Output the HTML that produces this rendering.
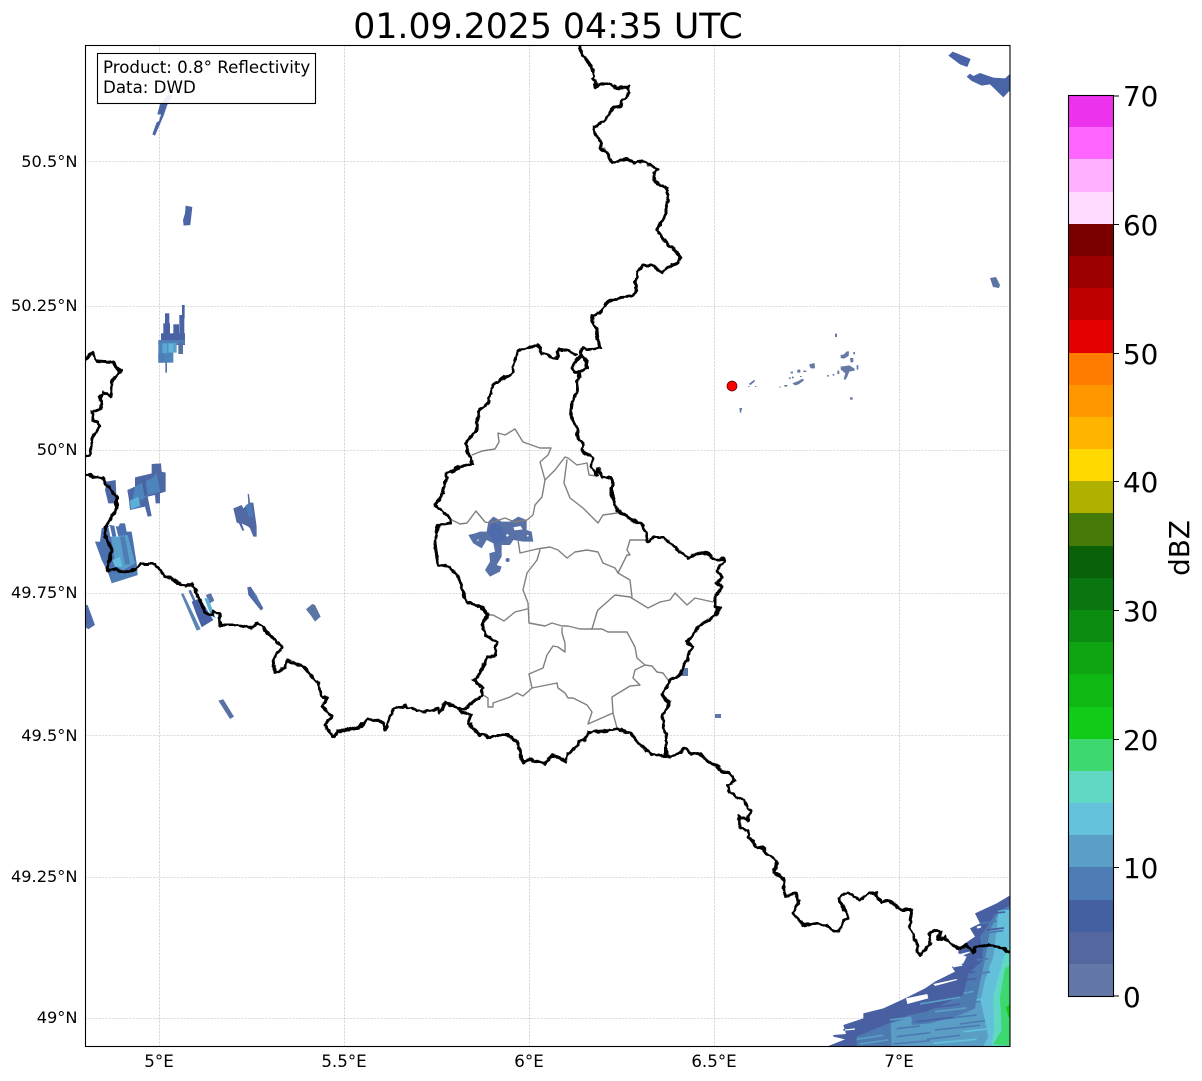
<!DOCTYPE html>
<html><head><meta charset="utf-8"><style>
html,body{margin:0;padding:0;background:#fff}
svg{display:block}
text{font-family:"DejaVu Sans","Liberation Sans",sans-serif;fill:#000}
</style></head><body>
<svg width="1202" height="1081" viewBox="0 0 1202 1081" xmlns="http://www.w3.org/2000/svg">
<defs><clipPath id="f"><rect x="85" y="45" width="925" height="1001"/></clipPath>
<filter id="w" filterUnits="userSpaceOnUse" x="60" y="20" width="980" height="1050"><feTurbulence type="fractalNoise" baseFrequency=".16" numOctaves="2" seed="4"/><feDisplacementMap in="SourceGraphic" scale="4.5" xChannelSelector="R" yChannelSelector="G"/></filter></defs>
<rect width="1202" height="1081" fill="#fff"/>
<g clip-path="url(#f)">
<!-- grid -->
<g stroke="#bcbcbc" stroke-width=".6" stroke-dasharray="2.2 1.2" fill="none">
<path d="M159.500 45V1046M344.500 45V1046M529.500 45V1046M714.500 45V1046M899.500 45V1046"/>
<path d="M85 161.500H1010M85 306.500H1010M85 450.500H1010M85 593.500H1010M85 735.500H1010M85 877.500H1010M85 1018.500H1010"/>
</g>
<!-- radar top-left, zoom 1 coords -->
<g transform="translate(85 45) scale(.3333)">
<path fill="#4a64a6" d="M202 268 215 232 222 228 228 208 217 208 225 178 250 148 262 150 246 182 236 212 210 272Z"/>
<path fill="#4a64a6" d="M302 482 322 486 316 540 296 542 294 525 300 505Z"/>
<g fill="#4862a4">
<rect x="240" y="805" width="13" height="60"/><rect x="235" y="835" width="20" height="40"/>
<rect x="265" y="838" width="17" height="40"/><rect x="283" y="810" width="15" height="80"/>
<rect x="291" y="780" width="8" height="40"/><rect x="228" y="865" width="72" height="35"/>
</g>
</g>
<!-- radar west, zoom 5 coords -->
<g transform="translate(85 340) scale(.3333)">
<rect x="220" y="0" width="80" height="12" fill="#4e7cb4"/>
<rect x="220" y="8" width="45" height="60" fill="#4e84bc"/>
<rect x="232" y="10" width="15" height="30" fill="#5aa8d4"/><rect x="250" y="10" width="15" height="28" fill="#62b4dc"/>
<rect x="220" y="40" width="18" height="28" fill="#4e7cb4"/>
<rect x="265" y="8" width="10" height="30" fill="#5a9ec6"/><rect x="280" y="8" width="14" height="34" fill="#56709f"/>
<rect x="241" y="65" width="5" height="33" fill="#5a72a4"/>
<path fill="#4e68a6" d="M127 450 150 440 150 412 200 400 200 372 228 370 230 395 242 398 242 455 225 460 225 490 212 490 210 465 188 470 200 528 188 530 180 500 135 510 132 480Z"/>
<path fill="#4e84bc" d="M150 440 200 415 215 400 225 455 190 465 170 480 140 490Z"/>
<path fill="#5ab0d8" d="M135 482 160 470 166 498 138 508Z"/>
<path fill="#4862a2" d="M170 415 180 412 188 465 178 468Z"/>
<path fill="#4c66a6" d="M65 425 92 420 95 490 70 490 60 450Z"/>
<path fill="#4c70ae" d="M30 605 45 605 50 565 65 560 75 555 100 560 105 550 120 550 125 575 140 575 155 670 158 705 80 730 70 700 50 660Z"/>
<path fill="#5a9fcc" d="M78 590 128 585 150 670 115 690 92 680Z"/>
<path fill="#64bce0" d="M82 660 105 650 112 680 90 680Z"/>
<path fill="#4e7cb4" d="M105 590 120 590 135 672 120 675Z"/>
<path fill="#4f7eb6" d="M75 700 155 690 158 705 80 730Z"/>
<path fill="#fff" d="M70 560 75 558 82 590 76 590ZM88 558 92 558 100 590 94 590Z"/>
<path fill="#5268a4" d="M445 505 470 495 475 505 490 490 488 462 492 462 495 488 505 488 515 560 515 590 505 590 495 565 490 560 470 550 478 572 472 572 462 550 455 548Z"/>
<path fill="#4c7cb6" d="M482 495 498 490 505 530 490 530Z"/>
<path fill="#5068a6" d="M487 742 497 740 510 760 535 805 528 812 510 790 490 765Z"/>
<path fill="#4e78b0" d="M505 765 515 765 525 795 518 790Z"/>
<path fill="#5a74a4" d="M663 808 682 792 690 795 707 830 690 845 680 830Z"/>
<path fill="#4e6cac" d="M0 795 8 795 30 855 10 868 0 860Z"/>
<path fill="#5a84b4" d="M288 762 295 760 347 868 335 872Z"/>
<path fill="#5870a4" d="M310 752 318 750 345 810 338 812Z"/>
<path fill="#4860a6" d="M320 785 345 775 385 840 350 862 335 825Z"/>
<path fill="#5a74aa" d="M362 765 378 760 388 782 375 790Z"/>
<path fill="#60b0d4" d="M358 775 370 775 392 835 378 828Z"/>
<path fill="#5872a6" d="M400 1082 415 1078 447 1130 435 1137Z"/>
</g>
<!-- central cluster, zoom 2 coords -->
<g transform="translate(430 340) scale(.3333)">
<path fill="#5872a8" d="M115 585 135 580 150 575 170 575 175 545 190 530 200 535 215 545 240 545 265 530 290 540 290 570 305 575 310 605 280 605 250 600 240 615 215 615 215 650 200 675 215 680 210 695 180 710 165 690 180 665 178 640 195 635 190 610 170 600 155 625 130 610Z"/>
<path fill="#4f6aaa" d="M172 575 190 545 215 560 230 600 195 610Z"/>
<circle cx="233" cy="660" r="6" fill="#5470a8"/>
<path fill="#fff" d="M250 562 272 558 278 568 254 571ZM290 585 296 585 294 592ZM140 600 146 598 145 604ZM228 585 234 582 237 588 230 590Z"/>
</g>
<g fill="#5c78a8"><rect x="682" y="668" width="6" height="8"/><rect x="715" y="714" width="6" height="4"/></g>
<!-- dots east, zoom 7 coords -->
<g transform="translate(720 320) scale(.3333)" fill="#6678a4">
<rect x="345" y="41" width="6" height="10"/>
<path d="M362 105 372 103 380 94 387 94 386 108 372 116 362 114ZM390 114 400 114 400 126 392 128ZM400 96h5v7h-5ZM410 135h5v14h-5Z"/>
<path d="M322 165h5v5h-5ZM338 162h5v5h-5ZM352 152h6v10h-6ZM362 140 388 136 404 146 404 152 388 155 382 170 376 180 371 177 376 160 362 148Z"/>
<rect x="390" y="232" width="8" height="7"/>
<path d="M267 133 284 129 285 145 272 145ZM232 149h9v9h-9ZM250 152h9v4h-9ZM212 155h7v5h-7ZM207 172h5v5h-5ZM216 170h5v5h-5ZM217 190 235 183 248 176 252 181 236 193 225 196ZM193 195h9v5h-9ZM178 200h4v3h-4ZM240 168h5v3h-5Z"/>
<path d="M86 192 102 180 106 183 92 195ZM85 198h4v3h-4ZM105 198h4v3h-4ZM58 264h8v6h-2v8h-4Z"/>
</g>
<!-- NE, zoom 11 coords -->
<g transform="translate(940 45) scale(.3333)" fill="#4a64a8">
<path d="M25 32 38 20 92 42 82 66 60 58Z"/>
<path d="M80 95 90 86 100 93 120 84 160 98 195 100 212 85 216 130 190 157 150 118 125 122 95 108Z"/>
</g>
<path fill="#5a74a6" d="M990 278 996 277 1000 285 999 288 993 287Z"/>
<!-- SE fan, zoom 4 coords -->
<g transform="translate(820 880) scale(.3333)">
<path fill="#4860a2" d="M25 498 75 478 40 470 40 465 78 462 70 435 130 415 130 400 190 385 255 355 315 325 345 305 405 275 395 260 430 250 440 230 415 220 415 205 435 190 465 170 450 145 480 130 465 100 530 70 572 45 572 498Z"/>
<path fill="#4e7ab2" d="M110 498 110 470 205 430 270 405 320 395 430 345 445 280 490 240 480 170 505 135 530 95 572 75 572 498Z"/>
<path fill="#5a9ec6" d="M215 498 212 430 275 410 275 435 330 430 420 405 465 385 475 330 495 240 510 150 535 100 572 88 572 498Z"/>
<path fill="#64c0da" d="M490 498 505 470 482 360 495 300 520 230 530 150 535 92 572 88 572 498Z"/>
<path fill="#60d8c4" d="M515 498 522 450 520 350 545 250 570 190 572 190 572 498Z"/>
<path fill="#3ed870" d="M520 492 545 450 540 350 555 265 572 255 572 498Z"/>
<path fill="#10cc18" d="M558 382 572 370 572 412 566 412Z"/>
<g stroke-width="5" fill="none">
<g stroke="#5a9ec6">
<path d="M110 478 190 466M120 492 205 480M210 420 270 412M430 340 462 334M300 372 420 352M345 395 440 384"/></g>
<g stroke="#4e7ab2">
<path d="M230 446 300 438M230 470 330 458M320 478 420 466M220 492 330 482M420 432 495 422M340 420 470 405M430 370 480 364M470 240 505 236M480 280 510 276M490 160 550 152M480 130 530 124M345 450 480 436"/></g>
<g stroke="#4860a2">
<path d="M280 392 340 384M330 384 420 372M430 300 470 296M430 280 465 276M450 215 490 210M500 150 552 144M520 100 555 96M70 450 130 444M290 425 400 412"/></g>
<g stroke="#64c0da">
<path d="M430 455 500 447M470 360 515 354M510 270 545 264M540 130 570 126M340 490 470 478"/></g>
</g>
<path fill="#fff" d="M258 355 322 342 325 355 262 372ZM340 312 410 297 412 300 345 318ZM420 222 448 215 450 218 424 228ZM398 258 425 252 428 257 400 262ZM470 140 482 137 484 142 472 146ZM75 448 105 445 105 449 75 452Z"/>
</g>
<!-- gray lines -->
<g fill="none" stroke="#808080" stroke-width="1.4" stroke-linejoin="round" stroke-linecap="round">
<path d="M472 455 482 451 495 449 499 442 498 433 505 435 515 429 523 442 540 448 551 448 548 455 540 462 545 480 542 497 535 505 533 515 527 520 515 522 505 518 490 523 485 522 476 511 467 523 460 524 452 520"/>
<path d="M545 480 555 470 565 457 568 458 577 465 587 463 589 475 597 476"/>
<path d="M567 460 564 483 570 498 583 508 598 523 603 515 617 513"/>
<path d="M518 540 520 553 537 549 550 547 558 550 567 558 575 552 587 550 598 552 603 563 615 568 618 573 627 555 630 555 627 550 630 540 647 540"/>
<path d="M618 573 630 580 632 597"/>
<path d="M540 550 537 560 527 573 523 590 528 603 529 623 545 626 552 623 562 626 568 626 580 629 592 629 602 629 608 632 627 632 635 647 637 658 645 665 652 666 657 672 663 673 668 680"/>
<path d="M592 629 597 612 598 610 615 595 630 597 648 608 660 602 670 600 675 593 687 605 695 598 713 602"/>
<path d="M562 628 562 633 565 643 565 652 558 647 553 646 547 655 543 668 529 674 532 688"/>
<path d="M483 695 488 698 488 707 493 707 493 703 510 697 517 693 523 696 532 688 547 685 557 683 558 688 565 693 568 698 573 698 587 705 592 712 588 724 613 713 612 697 630 686 640 685 633 678 635 670 645 665"/>
<path d="M613 713 617 728"/>
<path d="M483 620 488 615 493 615 504 621 515 612 527 609"/>
</g>
<!-- borders -->
<g fill="none" stroke="#000" stroke-width="3" stroke-linejoin="round" stroke-linecap="round" filter="url(#w)">
<path d="M578 42 583 57 591 65 594 76 592 78 596 82 595 88 600 84 610 84 617 88 628 87 629 92 622 102 621 106 613 108 605 120 594 127 595 135 602 142 599 148 607 152 612 163 622 160 628 160 635 162 643 161 655 168 658 169 654 173 655 182 667 188 668 198 666 208 666 215 657 230 665 242 677 252 680 257 678 263 668 267 663 273 652 265 643 265 638 272 635 282 637 290 632 297 625 296 607 302 602 312 593 315 592 322 597 330 598 340 600 347 587 350 582 348 581 355 587 362 587 368 580 373 574 372 572 369 575 362 581 356"/>
<path d="M581 372 577 380 578 390 573 400 570 415 577 428 578 438 583 442 582 450 592 458 591 468 597 475 598 468 602 477 612 478 612 495 617 510 632 520 643 525 648 542 655 537 663 537 678 550 688 558 703 552 717 560 724 558 725 562 717 570 722 577 717 583 722 587 715 597 715 607 720 608 715 615 700 626 687 642 692 647 680 675 670 680 667 687 662 695 670 703 662 717 666 737 666 757"/>
<path d="M576 355 568 350 558 350 557 359 542 353 538 345 517 351 512 373 493 385 488 403 478 411 477 430 465 443 472 463 460 467 447 473 443 493 435 505 450 518 450 523 438 525 435 543 438 565 450 567 457 575 467 603 480 606 488 615 482 625 485 635 497 642 495 656 487 657 480 673 474 680 483 688 482 695 465 708 460 709 463 713 471 715 468 723 480 735 490 737 497 735 508 735 518 742 520 754 523 762 530 760 540 762 545 764 552 755 558 757 566 762 567 753 577 747 578 742 585 740 588 732 603 731 618 729 630 733 640 745 652 754 660 755 665 757 675 755 686 748 692 753 701 755 710 763 715 765 723 772 729 773 735 781 728 785 730 792 738 798 745 800 747 808 752 811 747 820 740 816 738 820 742 828 748 830 748 837 757 847 762 848 772 858 777 860 774 873 783 877 784 893 786 896 795 893 799 902 793 913 803 925 818 923 838 932 844 920 848 918 843 907 839 898 847 892 860 900 869 893 876 893 882 903 888 900 902 910 912 910 909 927 917 943 917 952 920 955 930 945 929 933 937 930 941 932 937 939 945 938 958 949 967 945 973 952 975 948 990 945 1003 948 1008 952 1016 951"/>
<path d="M80 363 93 353 97 361 113 362 117 368 121 371 112 380 111 397 103 392 100 397 101 408 92 412 93 420 100 426 92 438 90 455 80 459"/>
<path d="M80 474 102 478 109 488 117 498 117 508 105 528 106 538 112 550 107 568 108 571 115 569 125 572 135 569 142 564 155 564 165 576 185 586 192 584 205 610 205 613 213 615 213 611 219 614 220 625 235 625 250 628 258 623 282 647 273 660 275 672 285 668 287 660 305 668 318 683 322 697 327 698 322 706 332 717 325 725 333 737 338 731 348 730 360 727 367 719 383 722 385 730 393 710 405 706 425 712 438 708 440 713 445 703 460 709"/>
</g>
<circle cx="732" cy="386" r="5" fill="#f00" stroke="#400" stroke-width=".7"/>
<!-- legend box -->
<rect x="97.500" y="53.500" width="218" height="50" fill="#fff" fill-opacity=".9" stroke="#000" stroke-width="1.1"/>
</g>
<rect x="85.500" y="45.500" width="924.500" height="1001" fill="none" stroke="#000" stroke-width="1.1"/>
<text x="103" y="73" font-size="16.67">Product: 0.8° Reflectivity</text>
<text x="103" y="93" font-size="16.67">Data: DWD</text>
<text x="548" y="38" font-size="34.7" text-anchor="middle">01.09.2025 04:35 UTC</text>
<!-- axis labels -->
<g font-size="16.2" text-anchor="end">
<text x="77.500" y="167">50.5°N</text><text x="77.500" y="311">50.25°N</text><text x="77.500" y="455">50°N</text><text x="77.500" y="598">49.75°N</text><text x="77.500" y="741">49.5°N</text><text x="77.500" y="882">49.25°N</text><text x="77.500" y="1023">49°N</text>
</g>
<g font-size="16.67" text-anchor="middle">
<text x="159" y="1067">5°E</text><text x="344" y="1067">5.5°E</text><text x="529" y="1067">6°E</text><text x="714" y="1067">6.5°E</text><text x="899" y="1067">7°E</text>
</g>
<!-- colorbar -->
<g>
<rect x="1068" y="95" width="46" height="32.2" fill="#ec32ec"/>
<rect x="1068" y="127" width="46" height="32.2" fill="#ff66ff"/>
<rect x="1068" y="159" width="46" height="33.2" fill="#ffb0ff"/>
<rect x="1068" y="192" width="46" height="32.2" fill="#ffdcff"/>
<rect x="1068" y="224" width="46" height="32.2" fill="#7a0000"/>
<rect x="1068" y="256" width="46" height="32.2" fill="#9c0000"/>
<rect x="1068" y="288" width="46" height="32.2" fill="#bf0000"/>
<rect x="1068" y="320" width="46" height="33.2" fill="#e40000"/>
<rect x="1068" y="353" width="46" height="32.2" fill="#ff7c00"/>
<rect x="1068" y="385" width="46" height="32.2" fill="#ff9800"/>
<rect x="1068" y="417" width="46" height="32.2" fill="#ffb400"/>
<rect x="1068" y="449" width="46" height="32.2" fill="#ffd800"/>
<rect x="1068" y="481" width="46" height="32.2" fill="#b0b000"/>
<rect x="1068" y="513" width="46" height="33.2" fill="#467a08"/>
<rect x="1068" y="546" width="46" height="32.2" fill="#086008"/>
<rect x="1068" y="578" width="46" height="32.2" fill="#0a7610"/>
<rect x="1068" y="610" width="46" height="32.2" fill="#0c8c10"/>
<rect x="1068" y="642" width="46" height="32.2" fill="#0ea412"/>
<rect x="1068" y="674" width="46" height="33.2" fill="#10b814"/>
<rect x="1068" y="707" width="46" height="32.2" fill="#10cc18"/>
<rect x="1068" y="739" width="46" height="32.2" fill="#3ed870"/>
<rect x="1068" y="771" width="46" height="32.2" fill="#60d8c4"/>
<rect x="1068" y="803" width="46" height="32.2" fill="#64c2dc"/>
<rect x="1068" y="835" width="46" height="32.2" fill="#5c9fc6"/>
<rect x="1068" y="867" width="46" height="33.2" fill="#4e7cb4"/>
<rect x="1068" y="900" width="46" height="32.2" fill="#4560a0"/>
<rect x="1068" y="932" width="46" height="32.2" fill="#54689f"/>
<rect x="1068" y="964" width="46" height="32.2" fill="#6478a8"/>
<rect x="1068.500" y="95.500" width="45" height="901" fill="none" stroke="#000" stroke-width="1.1"/>
<path d="M1114 96H1119M1114 224.500H1119M1114 353.500H1119M1114 481.500H1119M1114 610.500H1119M1114 739.500H1119M1114 867.500H1119M1114 996H1119" stroke="#000" stroke-width="1.1"/>
</g>
<g font-size="27.8">
<text x="1123" y="106">70</text><text x="1123" y="235">60</text><text x="1123" y="364">50</text><text x="1123" y="492">40</text><text x="1123" y="621">30</text><text x="1123" y="750">20</text><text x="1123" y="878">10</text><text x="1123" y="1007">0</text>
</g>
<text transform="translate(1189 548) rotate(-90)" font-size="27.8" text-anchor="middle">dBZ</text>
</svg>
</body></html>
